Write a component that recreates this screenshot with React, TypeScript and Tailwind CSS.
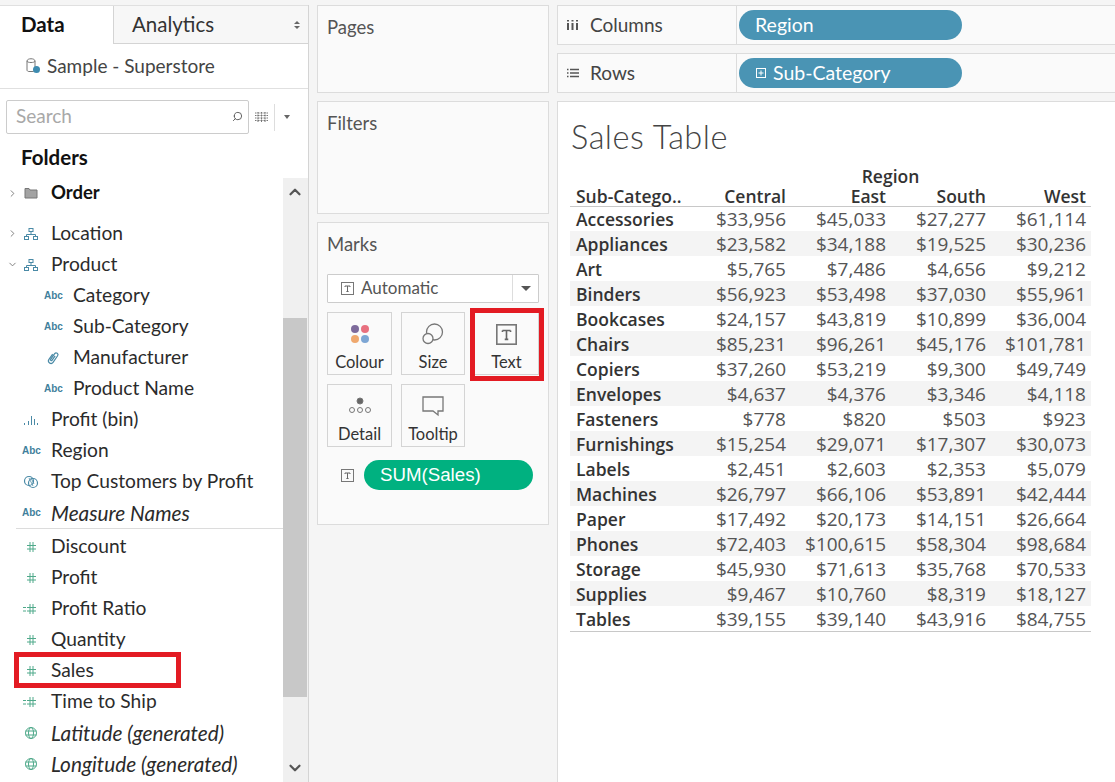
import { ChevronDown, ChevronRight, ChevronUp, Search } from "lucide-react";

const sans = "font-['Lato','Noto_Sans',sans-serif]";
const tableFont = "font-['Open_Sans','Noto_Sans',sans-serif]";

type IconKind = "folder" | "hier" | "abc" | "clip" | "bars" | "set" | "hash" | "calc" | "globe";

type Field = {
  name: string;
  icon: IconKind;
  indent?: boolean;
  italic?: boolean;
  caret?: "right" | "down";
  marked?: boolean;
};

const dims: Field[] = [
  { name: "Location", icon: "hier", caret: "right" },
  { name: "Product", icon: "hier", caret: "down" },
  { name: "Category", icon: "abc", indent: true },
  { name: "Sub-Category", icon: "abc", indent: true },
  { name: "Manufacturer", icon: "clip", indent: true },
  { name: "Product Name", icon: "abc", indent: true },
  { name: "Profit (bin)", icon: "bars" },
  { name: "Region", icon: "abc" },
  { name: "Top Customers by Profit", icon: "set" },
  { name: "Measure Names", icon: "abc", italic: true },
];

const measures: Field[] = [
  { name: "Discount", icon: "hash" },
  { name: "Profit", icon: "hash" },
  { name: "Profit Ratio", icon: "calc" },
  { name: "Quantity", icon: "hash" },
  { name: "Sales", icon: "hash", marked: true },
  { name: "Time to Ship", icon: "calc" },
  { name: "Latitude (generated)", icon: "globe", italic: true },
  { name: "Longitude (generated)", icon: "globe", italic: true },
];

const rows = [
  ["Accessories", "$33,956", "$45,033", "$27,277", "$61,114"],
  ["Appliances", "$23,582", "$34,188", "$19,525", "$30,236"],
  ["Art", "$5,765", "$7,486", "$4,656", "$9,212"],
  ["Binders", "$56,923", "$53,498", "$37,030", "$55,961"],
  ["Bookcases", "$24,157", "$43,819", "$10,899", "$36,004"],
  ["Chairs", "$85,231", "$96,261", "$45,176", "$101,781"],
  ["Copiers", "$37,260", "$53,219", "$9,300", "$49,749"],
  ["Envelopes", "$4,637", "$4,376", "$3,346", "$4,118"],
  ["Fasteners", "$778", "$820", "$503", "$923"],
  ["Furnishings", "$15,254", "$29,071", "$17,307", "$30,073"],
  ["Labels", "$2,451", "$2,603", "$2,353", "$5,079"],
  ["Machines", "$26,797", "$66,106", "$53,891", "$42,444"],
  ["Paper", "$17,492", "$20,173", "$14,151", "$26,664"],
  ["Phones", "$72,403", "$100,615", "$58,304", "$98,684"],
  ["Storage", "$45,930", "$71,613", "$35,768", "$70,533"],
  ["Supplies", "$9,467", "$10,760", "$8,319", "$18,127"],
  ["Tables", "$39,155", "$39,140", "$43,916", "$84,755"],
];

const FieldIcon = ({ kind }: { kind: IconKind }) => {
  const blue = "#4a8aa6";
  const green = "#4fa98a";
  if (kind === "abc") {
    return <span className="text-[10px] font-bold leading-none text-[#3f7f9c] font-['Liberation_Sans',sans-serif]">Abc</span>;
  }
  return (
    <svg width="18" height="16" viewBox="0 0 18 16" fill="none" strokeWidth="1">
      {kind === "folder" && (
        <path d="M3 3.5h4l1 1.5h7v8H3z" fill="#a3a3a3" stroke="#777" />
      )}
      {kind === "hier" && (
        <g stroke={blue}>
          <rect x="7" y="2.5" width="4" height="3" />
          <path d="M9 5.5v3M4.5 10.5v-2h9v2" />
          <rect x="2.5" y="10.5" width="4" height="3" />
          <rect x="11.5" y="10.5" width="4" height="3" />
        </g>
      )}
      {kind === "clip" && (
        <g stroke={blue} strokeWidth="1.2" transform="rotate(35 9 8)">
          <path d="M6.5 5v6.500a2.500 2.500 0 0 0 5 0V3.500a1.800 1.800 0 0 0-3.600 0V10.500a.8.8 0 0 0 1.600 0V5" />
        </g>
      )}
      {kind === "bars" && (
        <g stroke={blue}>
          <path d="M2.5 11v2M6.5 9v4M9.5 4v9M12.5 7v6M15.5 11v2" />
        </g>
      )}
      {kind === "set" && (
        <g stroke={blue} strokeWidth="1.2">
          <circle cx="7" cy="7" r="4.5" />
          <circle cx="11" cy="9" r="4.5" />
          <path d="M7 4l4 8M9 4l3 6" strokeWidth="0.8" />
        </g>
      )}
      {(kind === "hash" || kind === "calc") && (
        <g stroke={green}>
          <path d="M8 3v10M11 3v10M5 6.5h9M5 10h9" />
          {kind === "calc" && <path d="M1 6.5h3M1 10h3" />}
        </g>
      )}
      {kind === "globe" && (
        <g stroke={green}>
          <circle cx="9" cy="8" r="5.5" />
          <ellipse cx="9" cy="8" rx="2.5" ry="5.5" />
          <path d="M3.5 6h11M3.5 10h11" />
        </g>
      )}
    </svg>
  );
};

const FieldRow = ({ f }: { f: Field }) => (
  <div className={`relative flex h-[31px] items-center ${f.indent ? "pl-[44px]" : "pl-[22px]"}`}>
    {f.caret === "right" && <ChevronRight size={11} className="absolute left-[7px] text-[#777]" />}
    {f.caret === "down" && <ChevronDown size={11} className="absolute left-[7px] text-[#777]" />}
    <span className="flex w-[29px] shrink-0 items-center">
      <FieldIcon kind={f.icon} />
    </span>
    <span className={`whitespace-nowrap text-[#2b2b2b] ${f.italic ? "text-[20.800px] italic" : "text-[19.200px]"}`}>{f.name}</span>
    {f.marked && <div className="absolute left-[14px] top-[-3px] h-[36px] w-[167px] border-[5px] border-[#e31b23]" />}
  </div>
);

const TextGlyph = ({ size = 13 }: { size?: number }) => (
  <svg width={size} height={size} viewBox="0 0 13 13" fill="none">
    <rect x="0.5" y="0.5" width="12" height="12" stroke="#777" />
    <path d="M4 4h5M6.5 4v5.5M5.4 9.5h2.2M4 4v1M9 4v1" stroke="#666" />
  </svg>
);

const MarkButton = ({ label, children, marked }: { label: string; children: React.ReactNode; marked?: boolean }) => (
  <div className="relative flex h-[63px] flex-col items-center border border-[#d4d4d4] pt-[8px]">
    <div className="flex h-[26px] items-center">{children}</div>
    <span className="mt-[5px] text-[16.500px] leading-[20px] text-[#333]">{label}</span>
    {marked && <div className="absolute left-[-5px] top-[-5px] h-[73px] w-[74px] border-[5px] border-[#e31b23]" />}
  </div>
);

const Card = ({ title, h }: { title: string; h: string }) => (
  <div className={`${h} border border-[#dcdcdc] bg-[#fafafa] px-[9px] pt-[9px] text-[18.500px] leading-[24px] text-[#555]`}>{title}</div>
);

const Shelf = ({ label, glyph, pill, plus }: { label: string; glyph: React.ReactNode; pill: string; plus?: boolean }) => (
  <div className="flex h-[40px] border-y border-l border-[#dcdcdc] bg-[#fafafa]">
    <div className="flex w-[179px] items-center border-r border-[#dcdcdc] pl-[9px] text-[19px] text-[#444]">
      <span className="flex w-[23px] items-center">{glyph}</span>
      {label}
    </div>
    <div className="ml-[2px] flex items-center">
      <div className="flex h-[30px] w-[223px] items-center rounded-full bg-[#4a94b4] pl-[16px] text-[19.500px] text-white">
        {plus && (
          <svg width="10" height="10" viewBox="0 0 10 10" fill="none" stroke="#fff" className="mr-[7px] ml-[1px]">
            <rect x="0.5" y="0.5" width="9" height="9" />
            <path d="M2.5 5h5M5 2.5v5" />
          </svg>
        )}
        {pill}
      </div>
    </div>
  </div>
);

export default function App() {
  return (
    <div className={`flex h-[782px] w-[1115px] overflow-hidden bg-[#f5f5f5] pt-[5px] ${sans}`}>
      {/* data pane */}
      <aside className="flex h-full w-[309px] shrink-0 flex-col border-r border-[#d4d4d4] bg-white">
        <div className="flex h-[39px] shrink-0 border-t border-[#e0e0e0]">
          <div className="flex w-[113px] items-center pb-[2px] pl-[21px] text-[20.500px] font-bold text-[#111]">Data</div>
          <div className="flex flex-1 items-center justify-between border-b border-l border-[#d4d4d4] bg-[#f7f7f7] pl-[18px] pr-[8px] text-[20.500px] text-[#333]">
            Analytics
            <span className="flex flex-col gap-[2px]">
              <span className="h-0 w-0 border-x-[3px] border-b-[3px] border-x-transparent border-b-[#666]" />
              <span className="h-0 w-0 border-x-[3px] border-t-[3px] border-x-transparent border-t-[#666]" />
            </span>
          </div>
        </div>
        <div className="flex h-[45px] shrink-0 items-center border-b border-[#e0e0e0] pl-[25px] text-[19px] text-[#444]">
          <svg width="18" height="18" viewBox="0 0 18 18" fill="none" className="mr-[4px]">
            <path d="M2 4c0-3 8-3 8 0v9c0 1-1 1.500-3 1.500H4c-1 0-2-.5-2-1.500zM2 4c0 2 8 2 8 0" stroke="#777" />
            <circle cx="11.500" cy="12.500" r="3.500" fill="#3d8bb0" />
          </svg>
          Sample - Superstore
        </div>
        <div className="flex shrink-0 items-center pl-[6px] pt-[11px]">
          <div className="flex h-[34px] w-[243px] items-center justify-between rounded-[2px] border border-[#ccc] pb-[2px] pl-[9px] pr-[5px] text-[19px] text-[#a8a8a8]">
            Search
            <Search size={11} className="scale-x-[-1] text-[#555]" />
          </div>
          <svg width="13" height="10" viewBox="0 0 13 10" className="ml-[6px]" stroke="#777" fill="none">
            <path d="M0 1h13M0 3.500h13M0 6h13M0 8.500h13M3 0v10M6.500 0v10M10 0v10" strokeDasharray="1 .5" />
          </svg>
          <div className="ml-[6px] h-[27px] w-px bg-[#ddd]" />
          <span className="ml-[9px] h-0 w-0 border-x-[3.500px] border-t-[4px] border-x-transparent border-t-[#666]" />
        </div>
        <div className="shrink-0 pl-[21px] pt-[9px] text-[20.500px] font-bold leading-[28px] text-[#111]">Folders</div>
        <div className="flex min-h-0 flex-1 pt-[7px]">
          <div className="min-w-0 flex-1">
            <div className="relative flex h-[30px] items-center pl-[22px]">
              <ChevronRight size={11} className="absolute left-[7px] text-[#777]" />
              <span className="flex w-[29px] items-center">
                <FieldIcon kind="folder" />
              </span>
              <span className="text-[18.500px] font-bold text-[#111]">Order</span>
            </div>
            <div className="h-[10px]" />
            {dims.map((f) => (
              <FieldRow key={f.name} f={f} />
            ))}
            <div className="ml-[16px] mb-[2px] border-t border-[#dcdcdc]" />
            {measures.map((f) => (
              <FieldRow key={f.name} f={f} />
            ))}
          </div>
          <div className="flex w-[25px] shrink-0 flex-col bg-[#f0f0f0] pr-px">
            <div className="flex h-[28px] items-center justify-center">
              <ChevronUp size={18} strokeWidth={3} className="text-[#555]" />
            </div>
            <div className="h-[112px]" />
            <div className="h-[379px] bg-[#c8c8c8]" />
            <div className="flex flex-1 items-end justify-center pb-[5px]">
              <ChevronDown size={18} strokeWidth={3} className="text-[#555]" />
            </div>
          </div>
        </div>
      </aside>

      {/* cards */}
      <div className="ml-[8px] flex w-[232px] shrink-0 flex-col">
        <Card title="Pages" h="h-[88px]" />
        <div className="h-[8px]" />
        <Card title="Filters" h="h-[113px]" />
        <div className="h-[8px]" />
        <div className="h-[303px] border border-[#dcdcdc] bg-[#fafafa] px-[9px] pt-[9px]">
          <div className="text-[18.500px] leading-[24px] text-[#555]">Marks</div>
          <div className="mt-[18px] flex h-[29px] w-[212px] items-center rounded-[1px] border border-[#ccc] bg-white pb-[1px] pl-[13px] text-[17px] text-[#555]">
            <TextGlyph />
            <span className="ml-[7px] flex-1">Automatic</span>
            <span className="flex h-full w-[26px] items-center justify-center border-l border-[#ddd]">
              <span className="h-0 w-0 border-x-[5px] border-t-[5px] border-x-transparent border-t-[#555]" />
            </span>
          </div>
          <div className="mt-[9px] grid w-[212px] grid-cols-[65px_64px_65px] gap-[9px]">
            <MarkButton label="Colour">
              <svg width="20" height="20" viewBox="0 0 20 20">
                <circle cx="5" cy="5" r="4" fill="#7d6a9b" />
                <circle cx="15" cy="5" r="4" fill="#e8707f" />
                <circle cx="5" cy="15" r="4" fill="#efa86e" />
                <circle cx="15" cy="15" r="4" fill="#7da6d4" />
              </svg>
            </MarkButton>
            <MarkButton label="Size">
              <svg width="22" height="22" viewBox="0 0 22 22" fill="none" stroke="#777" strokeWidth="1.300">
                <circle cx="12.500" cy="9" r="8" />
                <circle cx="6" cy="15.500" r="5" fill="#fafafa" />
              </svg>
            </MarkButton>
            <MarkButton label="Text" marked>
              <TextGlyph size={21} />
            </MarkButton>
            <MarkButton label="Detail">
              <svg width="24" height="18" viewBox="0 0 24 18" fill="none" stroke="#777">
                <circle cx="12" cy="4" r="3" fill="#666" />
                <circle cx="4" cy="13" r="2.500" />
                <circle cx="12" cy="13" r="2.500" />
                <circle cx="20" cy="13" r="2.500" />
              </svg>
            </MarkButton>
            <MarkButton label="Tooltip">
              <svg width="22" height="21" viewBox="0 0 22 21" fill="none" stroke="#777" strokeWidth="1.300">
                <path d="M1 1h20v14h-5v4l-5-4H1z" />
              </svg>
            </MarkButton>
          </div>
          <div className="mt-[13px] flex items-center pl-[14px]">
            <TextGlyph />
            <div className="ml-[10px] flex h-[30px] w-[169px] items-center rounded-full bg-[#00b180] pl-[16px] font-['Liberation_Sans',sans-serif] text-[18.700px] text-white">SUM(Sales)</div>
          </div>
        </div>
      </div>

      {/* shelves and view */}
      <div className="ml-[8px] flex min-w-0 flex-1 flex-col">
        <Shelf
          label="Columns"
          pill="Region"
          glyph={
            <svg width="11" height="10" viewBox="0 0 11 10" stroke="#555" strokeWidth="2">
              <path d="M1 3v7M5.500 3v7M10 3v7M1 0v1.500M5.500 0v1.500M10 0v1.500" />
            </svg>
          }
        />
        <div className="h-[8px]" />
        <Shelf
          label="Rows"
          pill="Sub-Category"
          plus
          glyph={
            <svg width="12" height="10" viewBox="0 0 12 10" stroke="#555" strokeWidth="1.500">
              <path d="M3 1.500h9M3 5h9M3 8.500h9M0 1.500h1.500M0 5h1.500M0 8.500h1.500" />
            </svg>
          }
        />
        <div className="h-[8px]" />
        <div className="min-h-0 flex-1 border-l border-t border-[#dcdcdc] bg-white pl-[12px]">
          <h1 className="ml-px pt-[15px] text-[32.500px] font-light leading-[40px] tracking-[0.5px] text-[#444]">Sales Table</h1>
          <div className={`mt-[9px] w-[521px] text-[17.500px] leading-[27px] ${tableFont}`}>
            <div className="h-[21px] pl-[116px] text-center font-semibold leading-[20px] text-[#333]">
              <span className="pl-[4px]">Region</span>
            </div>
            <div className="mb-[-1px] grid h-[20px] grid-cols-[116px_100px_100px_100px_100px] border-b border-[#c8c8c8] pr-[5px] font-semibold leading-[19px] text-[#333]">
              <div className="pl-[6px]">Sub-Catego..</div>
              <div className="text-right">Central</div>
              <div className="text-right">East</div>
              <div className="text-right">South</div>
              <div className="text-right">West</div>
            </div>
            {rows.map((r, i) => (
              <div
                key={r[0]}
                className={`grid h-[25px] grid-cols-[116px_100px_100px_100px_100px] ${i % 2 === 1 ? "bg-[#f4f4f4]" : ""}`}
              >
                <div className="pl-[6px] font-semibold text-[#333]">{r[0]}</div>
                {r.slice(1).map((v, j) => (
                  <div key={j} className="text-right text-[19px] text-[#555]">
                    {v}
                  </div>
                ))}
              </div>
            ))}
            <div className="border-t border-[#c8c8c8]" />
          </div>
        </div>
      </div>
    </div>
  );
}
